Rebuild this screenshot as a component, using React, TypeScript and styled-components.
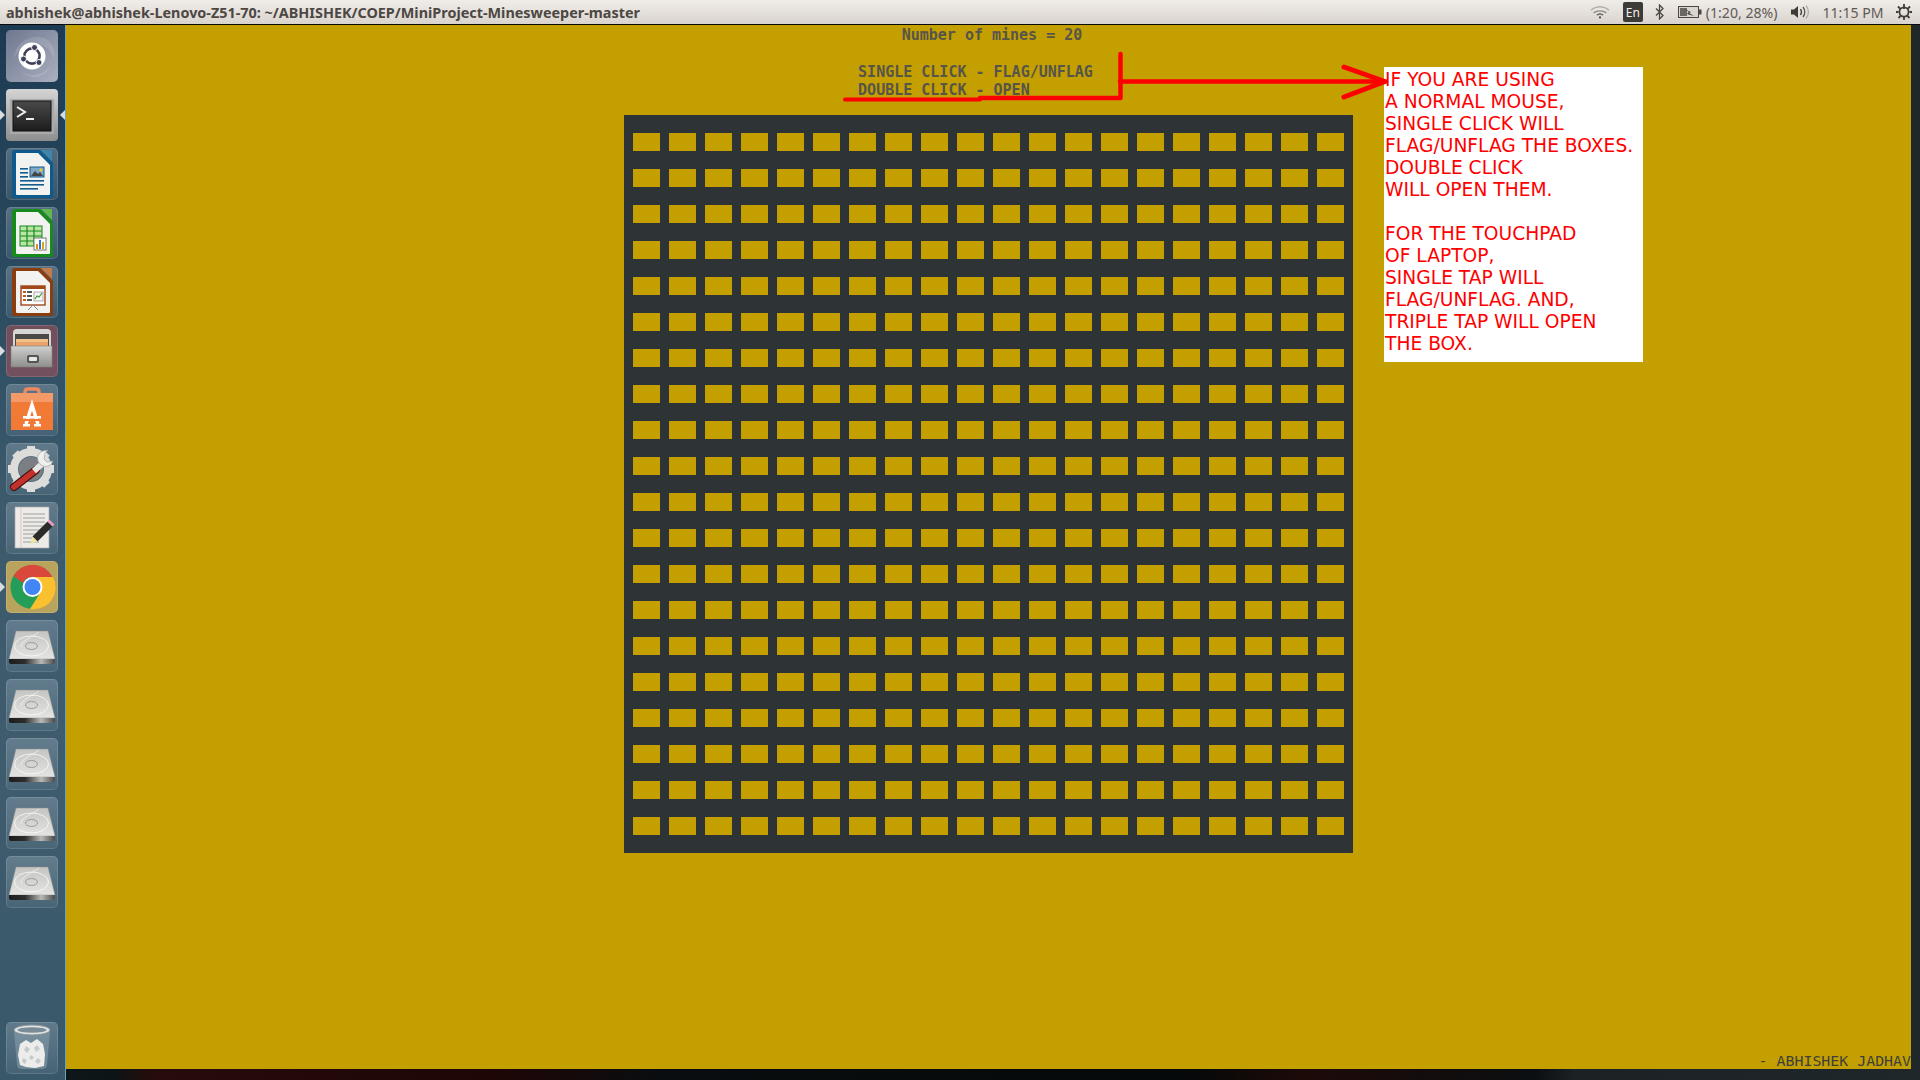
import React from "react"
import styled, { createGlobalStyle } from "styled-components"

const GOLD = "#c49f00"
const rowsCount = 20
const colsCount = 20

const GlobalStyle = createGlobalStyle`
  html, body {
    margin: 0;
    padding: 0;
    width: 1920px;
    height: 1080px;
    overflow: hidden;
    background: #10191d;
  }
`

const Desktop = styled.div`
  width: 1920px;
  height: 1080px;
  display: flex;
  flex-direction: column;
  overflow: hidden;
  background: linear-gradient(
    90deg,
    #0f1a1e 0%,
    #0d1416 6%,
    #260c0a 8%,
    #1e0606 26%,
    #0a0d0f 34%,
    #060909 62%,
    #1d0a08 68%,
    #0b0f11 80%,
    #1c2124 82%,
    #1f272b 100%
  );
`

const TopBar = styled.header`
  flex: 0 0 24px;
  height: 24px;
  display: flex;
  align-items: center;
  justify-content: space-between;
  padding: 0 8px 0 6px;
  background: linear-gradient(180deg, #f0ede9 0%, #e4dfda 55%, #d9d3ce 100%);
  border-bottom: 1px solid #0a0a0a;
  font-family: "Noto Sans", "Open Sans", sans-serif;
  color: #4c4742;
`

const Title = styled.div`
  font-size: 14.4px;
  font-weight: 700;
  white-space: nowrap;
`

const Tray = styled.div`
  display: flex;
  align-items: center;
  gap: 12.5px;
  font-size: 14.1px;
  color: #5f5a55;
`

const LangBadge = styled.span`
  width: 20px;
  height: 20px;
  display: flex;
  align-items: center;
  justify-content: center;
  background: #3c3b37;
  border-radius: 2px;
  color: #f2efea;
  font-size: 12px;
`

const BatteryGroup = styled.div`
  display: flex;
  align-items: center;
  gap: 4px;
`

const Body = styled.div`
  flex: 1;
  display: flex;
  min-height: 0;
`

const Launcher = styled.nav`
  flex: 0 0 59px;
  padding: 5px 0 6px 6px;
  display: flex;
  flex-direction: column;
  gap: 7px;
  background: linear-gradient(180deg, #1c3a52 0%, #27465c 18%, #3c5a6c 45%, #3e5c6e 70%, #39586a 100%);
  border-right: 1px solid #6fa4b8;
`

const Tile = styled.div<{ $tint?: string; $bottom?: boolean }>`
  position: relative;
  flex: 0 0 52px;
  width: 52px;
  height: 52px;
  border-radius: 5px;
  background: ${(p) => p.$tint || "linear-gradient(180deg, rgba(150,170,185,.42), rgba(110,135,150,.24))"};
  box-shadow: inset 0 0 0 1px rgba(255, 255, 255, 0.13);
  margin-top: ${(p) => (p.$bottom ? "auto" : "0")};
  svg {
    display: block;
  }
`

const Pip = styled.span<{ $side: "left" | "right" }>`
  position: absolute;
  top: 21px;
  ${(p) => (p.$side === "left" ? "left: -6px;" : "right: -7px;")}
  width: 0;
  height: 0;
  border-top: 5px solid transparent;
  border-bottom: 5px solid transparent;
  ${(p) => (p.$side === "left" ? "border-left: 5px solid #d8dde0;" : "border-right: 5px solid #d8dde0;")}
`

const GameWindow = styled.main`
  position: relative;
  flex: 0 0 1845px;
  height: 1044px;
  background: ${GOLD};
  overflow: hidden;
  display: flex;
  flex-direction: column;
  align-items: center;
`

const Heading = styled.div`
  font-family: "DejaVu Sans Mono", "Liberation Mono", monospace;
  font-size: 15px;
  font-weight: 700;
  line-height: 18px;
  color: #57544a;
  white-space: pre;
`

const MinesLine = styled(Heading)`
  margin: 1px 0 0 7px;
  height: 18px;
`

const HelpLines = styled(Heading)`
  margin: 19px 0 0 -26px;
  height: 36px;
`

const Board = styled.section`
  margin-top: 16px;
  box-sizing: border-box;
  width: 729px;
  height: 738px;
  padding: 18px 9px;
  background: #2e3436;
  display: grid;
  grid-template-columns: repeat(${colsCount}, 27px);
  grid-auto-rows: 18px;
  gap: 18px 9px;
`

const Cell = styled.div`
  background: ${GOLD};
`

const Signature = styled.div`
  position: absolute;
  right: 0;
  bottom: 0;
  font-family: "DejaVu Sans Mono", "Liberation Mono", monospace;
  font-size: 14.9px;
  line-height: 16px;
  color: #3e3f3c;
  white-space: pre;
`

const Note = styled.aside`
  position: absolute;
  left: 1318px;
  top: 42px;
  width: 259px;
  height: 295px;
  box-sizing: border-box;
  padding: 2px 0 0 1px;
  background: #fff;
  color: #ff0000;
  font-family: "DejaVu Sans", "Liberation Sans", sans-serif;
  font-size: 18.67px;
  line-height: 22px;
  white-space: pre;
`

const Markup = styled.svg`
  position: absolute;
  left: 0;
  top: 0;
  pointer-events: none;
`

const noteText = `IF YOU ARE USING
A NORMAL MOUSE,
SINGLE CLICK WILL
FLAG/UNFLAG THE BOXES.
DOUBLE CLICK
WILL OPEN THEM.

FOR THE TOUCHPAD
OF LAPTOP,
SINGLE TAP WILL
FLAG/UNFLAG. AND,
TRIPLE TAP WILL OPEN
THE BOX.`

const UbuntuIcon = () => (
  <svg width="52" height="52" viewBox="0 0 52 52">
    <defs>
      <linearGradient id="dash" x1="0" y1="0" x2="1" y2="1">
        <stop offset="0" stopColor="#6f7790" />
        <stop offset="1" stopColor="#aab0bf" />
      </linearGradient>
    </defs>
    <rect width="52" height="52" rx="5" fill="url(#dash)" />
    <path d="M8 30C8 14 22 4 38 8c8 3 12 12 10 22-2-10-10-17-20-16C17 15 10 22 8 30z" fill="#fff" opacity=".13" />
    <path d="M12 38c8 10 24 10 32-2-4 12-22 16-32 2z" fill="#fff" opacity=".16" />
    <circle cx="26" cy="26" r="13.5" fill="#fff" />
    <circle cx="26" cy="26" r="7.6" fill="none" stroke="#3f4258" strokeWidth="2.6" />
    <circle cx="28.500" cy="17.500" r="3" fill="#3f4258" stroke="#fff" />
    <circle cx="17.500" cy="29" r="3" fill="#3f4258" stroke="#fff" />
    <circle cx="33" cy="32.500" r="3" fill="#3f4258" stroke="#fff" />
  </svg>
)

const TerminalIcon = () => (
  <svg width="52" height="52" viewBox="0 0 52 52">
    <defs>
      <linearGradient id="termBg" x1="0" y1="0" x2="0" y2="1">
        <stop offset="0" stopColor="#d4d4d4" />
        <stop offset="1" stopColor="#8e8e8e" />
      </linearGradient>
      <linearGradient id="termScreen" x1="0" y1="0" x2="0" y2="1">
        <stop offset="0" stopColor="#4a4a4a" />
        <stop offset="1" stopColor="#1c1c1c" />
      </linearGradient>
    </defs>
    <rect width="52" height="52" rx="4" fill="url(#termBg)" />
    <rect x="4" y="10" width="44" height="35" fill="#a9a9a9" />
    <rect x="7" y="12" width="38" height="30" fill="url(#termScreen)" stroke="#111" />
    <path d="M11 18l8 5-8 5" fill="none" stroke="#eee" strokeWidth="2" />
    <rect x="20" y="29" width="8" height="2" fill="#eee" />
  </svg>
)

const DocShell = ({ edge, corner, children }: { edge: string; corner: string; children: React.ReactNode }) => (
  <svg width="52" height="52" viewBox="0 0 52 52">
    <path d="M9 2h25l13 13v33q0 2-2 2H9q-3 0-3-2V5q0-3 3-3z" fill={edge} />
    <path d="M35 2h11v11z" fill={corner} />
    <path d="M10 5h22l12 12v29q0 1-1 1H11q-1 0-1-1z" fill="#f2f2f0" />
    {children}
  </svg>
)

const WriterIcon = () => (
  <DocShell edge="#0f5a8c" corner="#3f86ad">
    <g fill="#135d8e">
      <rect x="14" y="20" width="8" height="1.6" />
      <rect x="14" y="24" width="8" height="1.6" />
      <rect x="14" y="28" width="8" height="1.6" />
      <rect x="14" y="32" width="24" height="1.6" />
      <rect x="14" y="36" width="24" height="1.6" />
      <rect x="14" y="40" width="18" height="1.6" />
    </g>
    <rect x="24" y="19" width="14" height="10" fill="#7ea9c6" stroke="#135d8e" />
    <path d="M25 28l4-5 3 3 2-2 3 4z" fill="#444" />
    <circle cx="35" cy="22" r="1.6" fill="#e8c53a" />
  </DocShell>
)

const CalcIcon = () => (
  <DocShell edge="#178a1c" corner="#62b84f">
    <rect x="14" y="19" width="22" height="20" fill="#b9e5a6" stroke="#178a1c" />
    <g stroke="#178a1c" strokeWidth="1.2">
      <path d="M14 24h22M14 29h22M14 34h22M21 19v20M28 19v20" />
    </g>
    <rect x="28" y="31" width="12" height="12" fill="#fff" stroke="#777" />
    <rect x="30" y="37" width="2" height="5" fill="#e98a1f" />
    <rect x="33" y="33" width="2" height="9" fill="#2a79c7" />
    <rect x="36" y="35" width="2" height="7" fill="#d9a21b" />
  </DocShell>
)

const ImpressIcon = () => (
  <DocShell edge="#8a3d0e" corner="#c27b49">
    <rect x="15" y="20" width="24" height="19" fill="#fff" stroke="#a0481a" strokeWidth="1.4" />
    <rect x="15" y="20" width="24" height="3" fill="#a0481a" />
    <g fill="#c25b1e">
      <rect x="17" y="25" width="3" height="2" />
      <rect x="17" y="29" width="3" height="2" />
      <rect x="17" y="33" width="3" height="2" />
      <rect x="21" y="25" width="5" height="2" fill="#555" />
      <rect x="21" y="29" width="5" height="2" fill="#555" />
      <rect x="21" y="33" width="5" height="2" fill="#555" />
    </g>
    <rect x="28" y="26" width="9" height="9" fill="#f4f4f4" stroke="#888" strokeWidth=".7" />
    <path d="M29 33l2-3 2 1 3-4" fill="none" stroke="#3e9a3e" strokeWidth="1.2" />
    <path d="M27 39l-5 5M27 39l5 5" stroke="#888" strokeWidth="1" />
  </DocShell>
)

const FilesIcon = () => (
  <svg width="52" height="52" viewBox="0 0 52 52">
    <defs>
      <linearGradient id="cabinet" x1="0" y1="0" x2="0" y2="1">
        <stop offset="0" stopColor="#cfcfcd" />
        <stop offset="1" stopColor="#8f8f8d" />
      </linearGradient>
    </defs>
    <path d="M7 8q0-4 4-4h30q4 0 4 4v34H7z" fill="#d6d6d4" />
    <rect x="9" y="9" width="34" height="13" fill="#4a4a48" />
    <rect x="10" y="14" width="32" height="4" fill="#efc08a" />
    <rect x="10" y="17" width="32" height="4" fill="#e8a36a" />
    <rect x="5" y="21" width="41" height="21" fill="url(#cabinet)" stroke="#807f7d" strokeWidth=".6" />
    <rect x="21" y="30" width="12" height="8" rx="2" fill="#565654" />
    <rect x="23" y="32" width="8" height="4" rx="1" fill="#e8e8e6" />
  </svg>
)

const StoreIcon = () => (
  <svg width="52" height="52" viewBox="0 0 52 52">
    <path d="M19 14V8q0-3 3-3h8q3 0 3 3v6" fill="none" stroke="#eb8a61" strokeWidth="3.500" />
    <path d="M5 9h42v37H5z" fill="#f07a36" />
    <path d="M5 9h42v9H5z" fill="#f49a68" />
    <path d="M20 40l6-19 6 19" fill="none" stroke="#fff" strokeWidth="3.500" />
    <rect x="17" y="32" width="18" height="2.500" fill="#fff" />
    <rect x="17" y="35" width="18" height="2" fill="#f07a36" />
    <rect x="17" y="40" width="7" height="2.500" fill="#fff" />
    <rect x="28" y="40" width="7" height="2.500" fill="#fff" />
  </svg>
)

const SettingsIcon = () => (
  <svg width="52" height="52" viewBox="0 0 52 52">
    <circle cx="25" cy="26" r="17" fill="none" stroke="#dcdcda" strokeWidth="8" />
    <g stroke="#dcdcda" strokeWidth="8">
      <path d="M25 3v8M25 41v8M2 26h8M40 26h8M9 10l5 5M41 42l-5-5M41 10l-5 5M9 42l5-5" />
    </g>
    <circle cx="25" cy="26" r="12" fill="#7b7f83" />
    <path d="M8 44l22-17" stroke="#3d1412" strokeWidth="8" strokeLinecap="round" />
    <path d="M8 44l22-17" stroke="#c4302b" strokeWidth="6" strokeLinecap="round" />
    <path d="M28 28l8-7" stroke="#e6e6e4" strokeWidth="6" />
    <path d="M37 8c-6 2-7 9-3 13s11 3 13-3l-6 1-3-3 1-6 3-3z" fill="#efefed" stroke="#999" strokeWidth=".6" />
  </svg>
)

const NotesIcon = () => (
  <svg width="52" height="52" viewBox="0 0 52 52">
    <rect x="9" y="5" width="34" height="41" fill="#ecebe8" stroke="#a9a9a9" strokeWidth=".7" />
    <path d="M15 5v41" stroke="#e6b8b8" strokeWidth=".8" />
    <g stroke="#8b8b8b" strokeWidth=".8">
      <path d="M17 12h22M17 16h22M17 20h22M17 24h20M17 28h18M17 32h14M17 36h10M17 40h16" />
    </g>
    <path d="M29 37l15-15" stroke="#2b2b2b" strokeWidth="7" />
    <path d="M44 22l2-2" stroke="#e59ac0" strokeWidth="7" />
    <path d="M26.500 34.500l5 5-7 2.500z" fill="#ece3a4" />
  </svg>
)

const ChromeIcon = () => (
  <svg width="52" height="52" viewBox="0 0 52 52">
    <circle cx="26.500" cy="26" r="22" fill="#239d57" />
    <path d="M26 16H47A22 22 0 0 1 24 48L34 32z" fill="#fbc02d" />
    <path d="M7.500 15A22 22 0 0 1 46.500 16H26a10 10 0 0 0-9 6z" fill="#d9483b" />
    <circle cx="26.500" cy="26" r="10" fill="#fff" />
    <circle cx="26.500" cy="26" r="8" fill="#4285f4" />
  </svg>
)

const DiskIcon = () => (
  <svg width="52" height="52" viewBox="0 0 52 52">
    <defs>
      <linearGradient id="diskTop" x1="0" y1="0" x2="0" y2="1">
        <stop offset="0" stopColor="#c4c4c2" />
        <stop offset="1" stopColor="#e4e4e2" />
      </linearGradient>
      <linearGradient id="diskFront" x1="0" y1="0" x2="1" y2="0">
        <stop offset="0" stopColor="#1c1c1c" />
        <stop offset=".35" stopColor="#2e2e2e" />
        <stop offset=".7" stopColor="#b9b9b7" />
        <stop offset="1" stopColor="#4a4a4a" />
      </linearGradient>
    </defs>
    <path d="M10 11h32l7 28H3z" fill="url(#diskTop)" stroke="#8e8e8c" strokeWidth=".5" />
    <ellipse cx="25.500" cy="26" rx="17" ry="10" fill="none" stroke="#fff" strokeOpacity=".7" />
    <ellipse cx="25.500" cy="26" rx="6" ry="3.500" fill="none" stroke="#9a9a98" />
    <path d="M33 12c-6 5-18 8-18 15" fill="none" stroke="#fff" strokeOpacity=".6" />
    <path d="M3 39h46v3q0 2-2 2H5q-2 0-2-2z" fill="url(#diskFront)" />
  </svg>
)

const TrashIcon = () => (
  <svg width="52" height="52" viewBox="0 0 52 52">
    <path d="M8 9l3 34q0 4 5 4h20q5 0 5-4l3-34z" fill="#8fa5b1" opacity=".5" />
    <path d="M14 22l6-4 5 3 6-4 6 5 2 10-1 12-9 2-9-1-6-2-2-10z" fill="#ecedeb" />
    <g fill="#c5cacb">
      <path d="M20 24l4 3-3 4-3-3z" />
      <path d="M31 23l3 4-4 3-2-4z" />
      <path d="M17 36l4 2-2 4-3-2z" />
      <path d="M32 36l3 3-3 3-3-3z" />
      <path d="M25 33l3 2-2 3-3-2z" />
    </g>
    <ellipse cx="26" cy="8" rx="18" ry="5" fill="#dfe3e4" stroke="#8e9497" />
    <ellipse cx="26" cy="8" rx="14.500" ry="2.800" fill="#788c97" />
  </svg>
)

const WifiIcon = () => (
  <svg width="20" height="16" viewBox="0 0 22 16" fill="none" stroke="#8d8984" strokeWidth="1.500">
    <path d="M1 6c6-5 14-5 20 0" stroke="#b5b1ac" />
    <path d="M4 9c4-3 10-3 14 0" />
    <path d="M7.500 11.500c2-1.500 5-1.500 7 0" stroke="#6a6661" />
    <circle cx="11" cy="14" r="1.200" fill="#4c4742" stroke="none" />
  </svg>
)

const BluetoothIcon = () => (
  <svg width="10" height="16" viewBox="0 0 10 16" fill="none" stroke="#4c4742" strokeWidth="1.300">
    <path d="M1 4.500l7 7-3.500 3.500V1L8 4.500l-7 7" />
  </svg>
)

const BatteryIcon = () => (
  <svg width="24" height="14" viewBox="0 0 24 14">
    <rect x=".5" y="1.500" width="20" height="11" fill="#d9d5d0" stroke="#4c4742" />
    <rect x="2" y="3" width="7" height="8" fill="#6b6661" />
    <rect x="21" y="4.500" width="2.500" height="5" fill="#4c4742" />
    <path d="M6 4l7 3-2 1 5 3-7-2 2-2z" fill="#35322f" />
  </svg>
)

const VolumeIcon = () => (
  <svg width="20" height="16" viewBox="0 0 20 16" fill="none">
    <path d="M1 5.500h3L8 2v12l-4-3.500H1z" fill="#3f3b37" />
    <path d="M10.500 5c1.300 2 1.300 4 0 6" stroke="#3f3b37" strokeWidth="1.300" />
    <path d="M13 3c2.200 3 2.200 7 0 10" stroke="#5a5550" strokeWidth="1.300" />
    <path d="M16 1.500c3 4 3 9 0 13" stroke="#b2aea9" strokeWidth="1.300" />
  </svg>
)

const PowerGearIcon = () => (
  <svg width="16" height="16" viewBox="0 0 16 16" fill="none" stroke="#3f3b37">
    <circle cx="8" cy="8" r="4.600" strokeWidth="1.800" />
    <path d="M8 0v5M2 2.500l2 2M14 2.500l-2 2M0 8h2.500M13.500 8H16M2.500 14l2-2M13.500 14l-2-2M8 13v3" strokeWidth="1.800" />
  </svg>
)

export default function App() {
  const cells = Array.from({ length: rowsCount * colsCount })

  return (
    <Desktop>
      <GlobalStyle />
      <TopBar>
        <Title>abhishek@abhishek-Lenovo-Z51-70: ~/ABHISHEK/COEP/MiniProject-Minesweeper-master</Title>
        <Tray>
          <WifiIcon />
          <LangBadge>En</LangBadge>
          <BluetoothIcon />
          <BatteryGroup>
            <BatteryIcon />
            <span>(1:20, 28%)</span>
          </BatteryGroup>
          <VolumeIcon />
          <span>11:15 PM</span>
          <PowerGearIcon />
        </Tray>
      </TopBar>
      <Body>
        <Launcher>
          <Tile><UbuntuIcon /></Tile>
          <Tile $tint="transparent"><Pip $side="left" /><TerminalIcon /><Pip $side="right" /></Tile>
          <Tile><WriterIcon /></Tile>
          <Tile><CalcIcon /></Tile>
          <Tile><ImpressIcon /></Tile>
          <Tile $tint="rgba(150,80,90,.65)"><Pip $side="left" /><FilesIcon /></Tile>
          <Tile><StoreIcon /></Tile>
          <Tile><SettingsIcon /></Tile>
          <Tile><NotesIcon /></Tile>
          <Tile $tint="#b8a45c"><Pip $side="left" /><ChromeIcon /></Tile>
          <Tile><DiskIcon /></Tile>
          <Tile><DiskIcon /></Tile>
          <Tile><DiskIcon /></Tile>
          <Tile><DiskIcon /></Tile>
          <Tile><DiskIcon /></Tile>
          <Tile $bottom><TrashIcon /></Tile>
        </Launcher>
        <GameWindow>
          <MinesLine>Number of mines = 20</MinesLine>
          <HelpLines>{"SINGLE CLICK - FLAG/UNFLAG\nDOUBLE CLICK - OPEN"}</HelpLines>
          <Board>
            {cells.map((_, i) => <Cell key={i} />)}
          </Board>
          <Signature>- ABHISHEK JADHAV</Signature>
          <Note>{noteText}</Note>
          <Markup width="1845" height="200" viewBox="66 25 1845 200" fill="none" stroke="#ff0000" strokeLinecap="round" strokeLinejoin="round">
            <path d="M845 99.500H980" strokeWidth="4" />
            <path d="M980 98H1120.500V54" strokeWidth="4.500" />
            <path d="M1120 81.500H1385" strokeWidth="4.500" />
            <path d="M1344 67l41 14.500-41 15.500" strokeWidth="5" />
          </Markup>
        </GameWindow>
      </Body>
    </Desktop>
  )
}
